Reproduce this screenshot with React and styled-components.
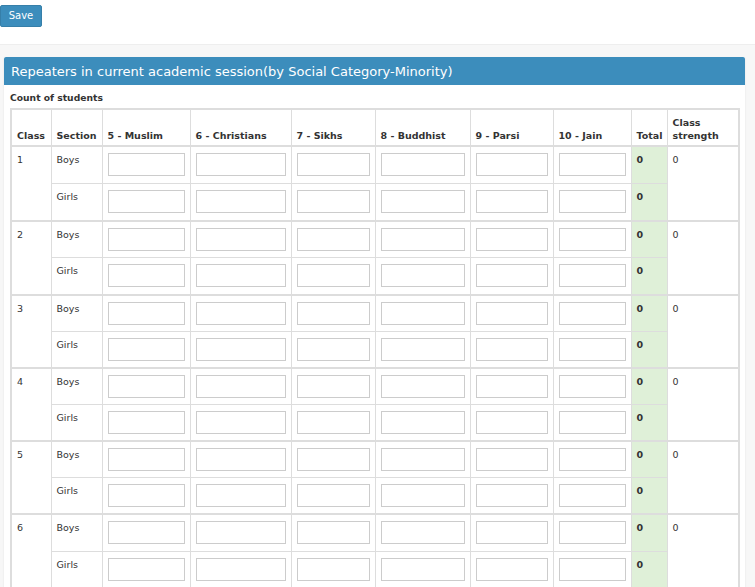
import React from "react";
import styled, { createGlobalStyle } from "styled-components";

const GlobalStyle = createGlobalStyle`
  html, body {
    margin: 0;
    padding: 0;
    background: #ffffff;
    font-family: "DejaVu Sans", Verdana, sans-serif;
    color: #333;
  }
`;

const TopBar = styled.div`
  height: 44px;
  background: #fff;
  padding-top: 4px;
  box-sizing: border-box;
`;

const SaveButton = styled.button`
  font-family: "DejaVu Sans", sans-serif;
  font-size: 10px;
  color: #fff;
  background: #3c8dbc;
  border: 1px solid #367fa9;
  border-radius: 2px;
  height: 22px;
  width: 42px;
  padding: 0;
  cursor: pointer;
`;

const Content = styled.div`
  background: #f7f7f7;
  border-top: 1px solid #eee;
  padding: 12px 10px 0 4px;
  min-height: 543px;
  box-sizing: border-box;
`;

const Panel = styled.div`
  background: #fff;
  box-shadow: 0 1px 2px rgba(0, 0, 0, 0.08);
`;

const PanelHeading = styled.div`
  background: #3c8dbc;
  color: #fff;
  height: 28px;
  display: flex;
  align-items: center;
  padding-left: 7px;
  font-size: 13px;
  border-top-right-radius: 2px;
  border-top-left-radius: 2px;
`;

const PanelBody = styled.div`
  padding: 6px 7px 0 6px;
`;

const Caption = styled.div`
  font-size: 9.2px;
  font-weight: bold;
  height: 17px;
  line-height: 14px;
`;

const Table = styled.table`
  width: 100%;
  border-collapse: collapse;
  border: 2px solid #ddd;
  font-size: 9.5px;
  table-layout: fixed;
`;

const Th = styled.th`
  border: 1px solid #ddd;
  border-bottom: 2px solid #ddd;
  text-align: left;
  vertical-align: bottom;
  padding: 0 5px 3px;
  height: 37px;
  box-sizing: border-box;
  font-weight: bold;
  line-height: 13px;
`;

const Group = styled.tbody`
  & + & {
    border-top: 2px solid #ddd;
  }
`;

const Td = styled.td`
  border: 1px solid #ddd;
  vertical-align: top;
  padding: ${(p) => (p.$input ? "6px 5px 0" : "7px 5px 0")};
  height: ${(p) => (p.$tall ? "37.65px" : "36.65px")};
  box-sizing: border-box;
  background: ${(p) => (p.$total ? "#dff0d8" : "transparent")};
  font-weight: ${(p) => (p.$total ? "bold" : "normal")};
  line-height: 12px;
`;

const Input = styled.input`
  display: block;
  width: 100%;
  height: 23px;
  box-sizing: border-box;
  border: 1px solid #ccc;
  background: #fff;
  margin: 0;
  padding: 0 4px;
`;

const columns = [
  { label: "Class", w: 40 },
  { label: "Section", w: 51 },
  { label: "5 - Muslim", w: 88 },
  { label: "6 - Christians", w: 101 },
  { label: "7 - Sikhs", w: 84 },
  { label: "8 - Buddhist", w: 95 },
  { label: "9 - Parsi", w: 83 },
  { label: "10 - Jain", w: 78 },
  { label: "Total", w: 36 },
  { label: "Class strength", w: 72 },
];

const classes = [1, 2, 3, 4, 5, 6];
const inputCols = 6;

function SectionRow({ cls, section, first, tall }) {
  return (
    <tr>
      {first && <Td rowSpan={2}>{cls}</Td>}
      <Td $tall={tall}>{section}</Td>
      {Array.from({ length: inputCols }).map((_, i) => (
        <Td key={i} $input $tall={tall}>
          <Input type="text" />
        </Td>
      ))}
      <Td $total $tall={tall}>0</Td>
      {first && <Td rowSpan={2}>0</Td>}
    </tr>
  );
}

export default function App() {
  return (
    <>
      <GlobalStyle />
      <TopBar>
        <SaveButton>Save</SaveButton>
      </TopBar>
      <Content>
        <Panel>
          <PanelHeading>Repeaters in current academic session(by Social Category-Minority)</PanelHeading>
          <PanelBody>
            <Caption>Count of students</Caption>
            <Table>
              <colgroup>
                {columns.map((c) => (
                  <col key={c.label} style={{ width: c.w }} />
                ))}
              </colgroup>
              <thead>
                <tr>
                  {columns.map((c) => (
                    <Th key={c.label}>{c.label}</Th>
                  ))}
                </tr>
              </thead>
              {classes.map((cls, i) => (
                <Group key={cls}>
                  <SectionRow cls={cls} section="Boys" first tall={i === 0} />
                  <SectionRow cls={cls} section="Girls" tall={i === 0} />
                </Group>
              ))}
            </Table>
          </PanelBody>
        </Panel>
      </Content>
    </>
  );
}
